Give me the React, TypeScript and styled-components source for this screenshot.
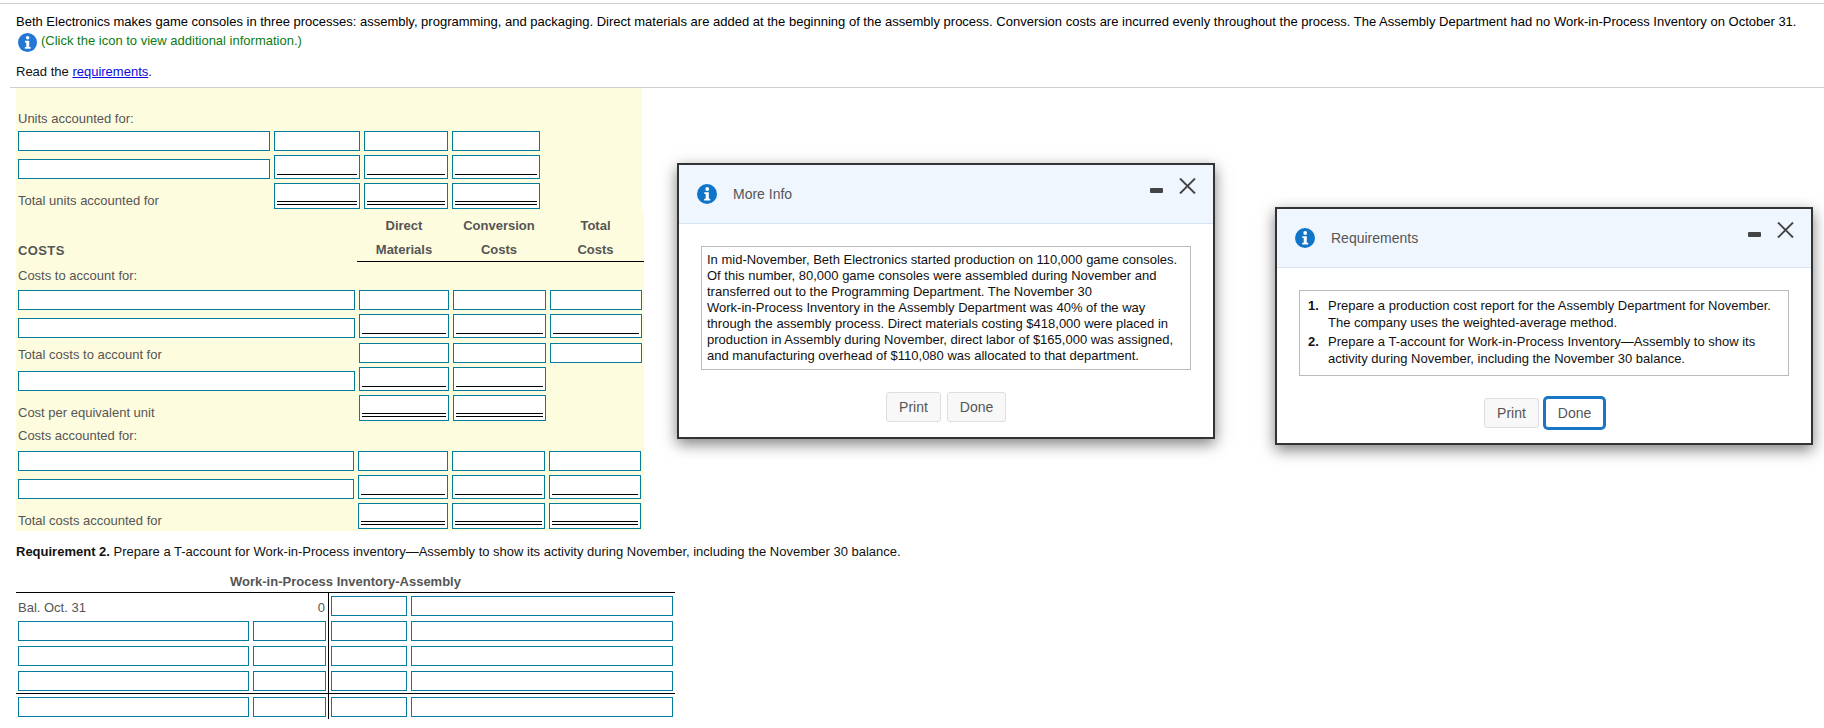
import React from 'react';
import styled, { createGlobalStyle } from 'styled-components';

const GlobalStyle = createGlobalStyle`
  html, body {
    margin: 0;
    padding: 0;
    background: #fff;
  }
  body {
    font-family: "Liberation Sans", Arial, sans-serif;
    font-size: 13px;
    color: #000;
    overflow: hidden;
  }
`;

const Page = styled.div`
  position: relative;
  width: 1824px;
  height: 728px;
  overflow: hidden;
  padding-top: 3px;
  box-sizing: border-box;
`;

const TopRule = styled.div`
  height: 1px;
  background: #d0d0d0;
`;

const Question = styled.div`
  padding: 10px 0 0 16px;
`;

const TextLine = styled.div`
  line-height: 16px;
  white-space: nowrap;
`;

const InfoLine = styled.div`
  display: flex;
  align-items: flex-start;
  gap: 4px;
  height: 23px;
  padding-left: 2px;
  margin-top: 3px;
  color: #0a7c12;
  line-height: 16px;
`;

const RequirementsLine = styled(TextLine)`
  margin-top: 8px;
  color: #111;
`;

const ReqLink = styled.a`
  color: #0a0ae0;
  text-decoration: underline;
`;

const Divider = styled.div`
  height: 1px;
  background: #cfcfcf;
  margin: 7px 0 0 10px;
`;

const Panel = styled.div<{ $width: number; $pad?: string }>`
  width: ${({ $width }) => $width}px;
  margin-left: 16px;
  padding: ${({ $pad }) => $pad || '0'};
  background: #fefcdf;
  box-sizing: border-box;
  color: #555;
`;

const Caption = styled.div<{ $height: number }>`
  height: ${({ $height }) => $height}px;
  display: flex;
  align-items: center;
  padding-left: 2px;
  line-height: 16px;
  box-sizing: border-box;
`;

const UnitsCaption = styled(Caption)`
  padding-bottom: 3px;
`;

const Row = styled.div<{ $cols: string; $gap?: number }>`
  display: grid;
  grid-template-columns: ${({ $cols }) => $cols};
  column-gap: 4px;
  align-items: end;
  padding-left: 2px;
  margin-bottom: ${({ $gap }) => ($gap === undefined ? 4 : $gap)}px;
`;

const RowLabel = styled.div`
  line-height: 16px;
`;

const Field = styled.div<{ $height?: number; $rule?: 'single' | 'double' }>`
  position: relative;
  height: ${({ $height }) => $height || 20}px;
  border: 1px solid #047c9c;
  background: #fff;
  box-sizing: border-box;

  ${({ $rule }) =>
    $rule
      ? `
    &::after {
      content: '';
      position: absolute;
      left: 2px;
      right: 2px;
      bottom: 3px;
      border-bottom: 1px solid #000;
      border-top: ${$rule === 'double' ? '1px solid #000' : '0'};
      height: ${$rule === 'double' ? 2 : 0}px;
    }
  `
      : ''}
`;

const HeadRow = styled.div<{ $height: number; $ruled?: boolean }>`
  display: grid;
  grid-template-columns: 341px 94px 96px 97px;
  height: ${({ $height }) => $height}px;
  align-items: center;
  font-weight: bold;
  color: #555;
`;

const HeadCell = styled.div<{ $ruled?: boolean }>`
  align-self: stretch;
  display: flex;
  align-items: center;
  justify-content: center;
  box-sizing: border-box;
  border-bottom: ${({ $ruled }) => ($ruled ? '1px solid #000' : '0')};
`;

const CostsTitle = styled.div`
  padding-left: 2px;
  letter-spacing: 0.4px;
`;

const RequirementTwo = styled(TextLine)`
  margin: 13px 0 0 16px;
  color: #111;
`;

const AccountTitle = styled.div`
  width: 659px;
  margin: 14px 0 0 16px;
  border-bottom: 1px solid #000;
  padding-bottom: 2px;
  line-height: 16px;
  text-align: center;
  font-weight: bold;
  color: #555;
`;

const AccountRow = styled.div<{ $height: number; $ruled?: boolean }>`
  display: grid;
  grid-template-columns: 313px 346px;
  width: 659px;
  margin-left: 16px;
  height: ${({ $height }) => $height}px;
  box-sizing: content-box;
  border-bottom: ${({ $ruled }) => ($ruled ? '1px solid #000' : '0')};
`;

const DebitSide = styled.div<{ $top: number }>`
  display: grid;
  grid-template-columns: 231px 73px;
  column-gap: 4px;
  align-content: start;
  padding: ${({ $top }) => $top}px 0 0 2px;
  border-right: 1px solid #000;
  box-sizing: border-box;
  color: #555;
`;

const CreditSide = styled.div<{ $top: number }>`
  display: grid;
  grid-template-columns: 76px 262px;
  column-gap: 4px;
  align-content: start;
  padding: ${({ $top }) => $top}px 0 0 2px;
  box-sizing: border-box;
`;

const StaticCell = styled.div<{ $right?: boolean }>`
  line-height: 23px;
  height: 20px;
  text-align: ${({ $right }) => ($right ? 'right' : 'left')};
  padding-right: ${({ $right }) => ($right ? 1 : 0)}px;
`;

const Modal = styled.div<{ $left: number; $top: number; $width: number; $height: number }>`
  position: absolute;
  left: ${({ $left }) => $left}px;
  top: ${({ $top }) => $top}px;
  width: ${({ $width }) => $width}px;
  height: ${({ $height }) => $height}px;
  box-sizing: border-box;
  border: 2px solid #333;
  background: #fff;
  box-shadow: 0 5px 14px rgba(0, 0, 0, 0.5);
`;

const ModalHeader = styled.div`
  display: flex;
  align-items: center;
  height: 59px;
  box-sizing: border-box;
  padding: 0 17px 1px 18px;
  background: #f0f6fe;
  border-bottom: 1px solid #d3e3f1;
`;

const ModalTitle = styled.span`
  margin-left: 16px;
  font-size: 14px;
  color: #555;
`;

const WindowControls = styled.div`
  display: flex;
  align-self: flex-start;
  margin-left: auto;
  margin-top: 13px;
  gap: 16px;
`;

const MinimizeBar = styled.span`
  width: 13px;
  height: 5px;
  margin-top: 10px;
  background: #444;
  border-radius: 1px;
`;

const ModalBody = styled.div`
  padding: 22px 22px 0;
`;

const ContentBox = styled.div<{ $height: number }>`
  height: ${({ $height }) => $height}px;
  box-sizing: border-box;
  border: 1px solid #bbb;
  padding: 5px;
  line-height: 16px;
  color: #111;
`;

const ReqList = styled.ol`
  list-style: none;
  margin: 0;
  padding: 2px 0 0 3px;
`;

const ReqItem = styled.li`
  display: grid;
  grid-template-columns: 20px 1fr;
  margin-bottom: 3px;
  line-height: 16.5px;
`;

const ReqNumber = styled.b``;

const ButtonRow = styled.div`
  display: flex;
  justify-content: center;
  gap: 6px;
  margin-top: 22px;
`;

const DialogButton = styled.button<{ $width: number; $focused?: boolean }>`
  width: ${({ $width }) => $width}px;
  height: 30px;
  padding: 0;
  font: 14px "Liberation Sans", Arial, sans-serif;
  color: #555;
  background: ${({ $focused }) => ($focused ? '#fff' : '#f8f8f8')};
  border: 1px solid ${({ $focused }) => ($focused ? '#1a76c4' : '#ddd')};
  border-radius: 3px;
  box-shadow: ${({ $focused }) => ($focused ? '0 0 0 2px #1a76c4' : 'none')};
`;

const InfoIcon = ({ size = 20, color = '#0f75c9' }: { size?: number; color?: string }) => (
  <svg width={size} height={size} viewBox="0 0 20 20" style={{ flex: 'none' }}>
    <circle cx="10" cy="10" r="10" fill={color} />
    <circle cx="10.2" cy="5" r="1.9" fill="#fff" />
    <path d="M7.3 8.2h4.5v6.6h1.4v1.7H7.2v-1.7h1.5v-4.9H7.3z" fill="#fff" />
  </svg>
);

const CloseIcon = () => (
  <svg width="17" height="16" viewBox="0 0 17 16">
    <path d="M1 0.5 16 15.5M16 0.5 1 15.5" stroke="#444" strokeWidth="1.9" fill="none" />
  </svg>
);

const WindowHead = ({ title }: { title: string }) => (
  <ModalHeader>
    <InfoIcon />
    <ModalTitle>{title}</ModalTitle>
    <WindowControls>
      <MinimizeBar />
      <CloseIcon />
    </WindowControls>
  </ModalHeader>
);

const unitCols = '252px 86px 84px 88px';
const costCols = '337px 90px 93px 92px';
const lowerCols = '336px 90px 93px 92px';

const infoLines = [
  'In mid-November, Beth Electronics started production on 110,000 game consoles.',
  'Of this number, 80,000 game consoles were assembled during November and',
  'transferred out to the Programming Department. The November 30',
  'Work-in-Process Inventory in the Assembly Department was 40% of the way',
  'through the assembly process. Direct materials costing $418,000 were placed in',
  'production in Assembly during November, direct labor of $165,000 was assigned,',
  'and manufacturing overhead of $110,080 was allocated to that department.',
];

const accountRows = [
  { height: 26, top: 3 },
  { height: 25, top: 2 },
  { height: 25, top: 2 },
  { height: 24, top: 2, ruled: true },
  { height: 25, top: 3 },
];

export default function App() {
  return (
    <Page>
      <GlobalStyle />
      <TopRule />
      <Question>
        <TextLine>
          Beth Electronics makes game consoles in three processes: assembly, programming, and packaging. Direct
          materials are added at the beginning of the assembly process. Conversion costs are incurred evenly throughout
          the process. The Assembly Department had no Work-in-Process Inventory on October 31.
        </TextLine>
        <InfoLine>
          <InfoIcon size={19} color="#2277d4" />
          (Click the icon to view additional information.)
        </InfoLine>
        <RequirementsLine>
          Read the <ReqLink href="#">requirements</ReqLink>.
        </RequirementsLine>
      </Question>
      <Divider />

      <Panel $width={626} $pad="21px 0 1px">
        <UnitsCaption $height={22}>Units accounted for:</UnitsCaption>
        <Row $cols={unitCols}>
          <Field />
          <Field />
          <Field />
          <Field />
        </Row>
        <Row $cols={unitCols}>
          <Field />
          <Field $height={24} $rule="single" />
          <Field $height={24} $rule="single" />
          <Field $height={24} $rule="single" />
        </Row>
        <Row $cols={unitCols} $gap={0}>
          <RowLabel>Total units accounted for</RowLabel>
          <Field $height={26} $rule="double" />
          <Field $height={26} $rule="double" />
          <Field $height={26} $rule="double" />
        </Row>
      </Panel>

      <Panel $width={628} $pad="3px 0 2px">
        <HeadRow $height={25}>
          <span />
          <HeadCell>Direct</HeadCell>
          <HeadCell>Conversion</HeadCell>
          <HeadCell>Total</HeadCell>
        </HeadRow>
        <HeadRow $height={24}>
          <CostsTitle>COSTS</CostsTitle>
          <HeadCell $ruled>Materials</HeadCell>
          <HeadCell $ruled>Costs</HeadCell>
          <HeadCell $ruled>Costs</HeadCell>
        </HeadRow>
        <Caption $height={28}>Costs to account for:</Caption>
        <Row $cols={costCols}>
          <Field />
          <Field />
          <Field />
          <Field />
        </Row>
        <Row $cols={costCols} $gap={5}>
          <Field />
          <Field $height={24} $rule="single" />
          <Field $height={24} $rule="single" />
          <Field $height={24} $rule="single" />
        </Row>
        <Row $cols={costCols}>
          <RowLabel>Total costs to account for</RowLabel>
          <Field />
          <Field />
          <Field />
        </Row>
        <Row $cols={costCols}>
          <Field />
          <Field $height={24} $rule="single" />
          <Field $height={24} $rule="single" />
        </Row>
        <Row $cols={costCols} $gap={0}>
          <RowLabel>Cost per equivalent unit</RowLabel>
          <Field $height={26} $rule="double" />
          <Field $height={26} $rule="double" />
        </Row>
        <Caption $height={30}>Costs accounted for:</Caption>
        <Row $cols={lowerCols}>
          <Field />
          <Field />
          <Field />
          <Field />
        </Row>
        <Row $cols={lowerCols}>
          <Field />
          <Field $height={24} $rule="single" />
          <Field $height={24} $rule="single" />
          <Field $height={24} $rule="single" />
        </Row>
        <Row $cols={lowerCols} $gap={0}>
          <RowLabel>Total costs accounted for</RowLabel>
          <Field $height={26} $rule="double" />
          <Field $height={26} $rule="double" />
          <Field $height={26} $rule="double" />
        </Row>
      </Panel>

      <RequirementTwo>
        <b>Requirement 2.</b> Prepare a T-account for Work-in-Process inventory—Assembly to show its activity during
        November, including the November 30 balance.
      </RequirementTwo>
      <AccountTitle>Work-in-Process Inventory-Assembly</AccountTitle>
      {accountRows.map((row, index) => (
        <AccountRow key={index} $height={row.height} $ruled={row.ruled}>
          <DebitSide $top={row.top}>
            {index === 0 ? (
              <>
                <StaticCell>Bal. Oct. 31</StaticCell>
                <StaticCell $right>0</StaticCell>
              </>
            ) : (
              <>
                <Field />
                <Field />
              </>
            )}
          </DebitSide>
          <CreditSide $top={row.top}>
            <Field />
            <Field />
          </CreditSide>
        </AccountRow>
      ))}

      <Modal $left={677} $top={163} $width={538} $height={276}>
        <WindowHead title="More Info" />
        <ModalBody>
          <ContentBox $height={124}>
            {infoLines.map((line) => (
              <TextLine key={line}>{line}</TextLine>
            ))}
          </ContentBox>
          <ButtonRow>
            <DialogButton $width={55}>Print</DialogButton>
            <DialogButton $width={59}>Done</DialogButton>
          </ButtonRow>
        </ModalBody>
      </Modal>

      <Modal $left={1275} $top={207} $width={538} $height={238}>
        <WindowHead title="Requirements" />
        <ModalBody>
          <ContentBox $height={86}>
            <ReqList>
              <ReqItem>
                <ReqNumber>1.</ReqNumber>
                <span>
                  Prepare a production cost report for the Assembly Department for November.
                  <br />
                  The company uses the weighted-average method.
                </span>
              </ReqItem>
              <ReqItem>
                <ReqNumber>2.</ReqNumber>
                <span>
                  Prepare a T-account for Work-in-Process Inventory—Assembly to show its
                  <br />
                  activity during November, including the November 30 balance.
                </span>
              </ReqItem>
            </ReqList>
          </ContentBox>
          <ButtonRow>
            <DialogButton $width={55}>Print</DialogButton>
            <DialogButton $width={59} $focused>
              Done
            </DialogButton>
          </ButtonRow>
        </ModalBody>
      </Modal>
    </Page>
  );
}
